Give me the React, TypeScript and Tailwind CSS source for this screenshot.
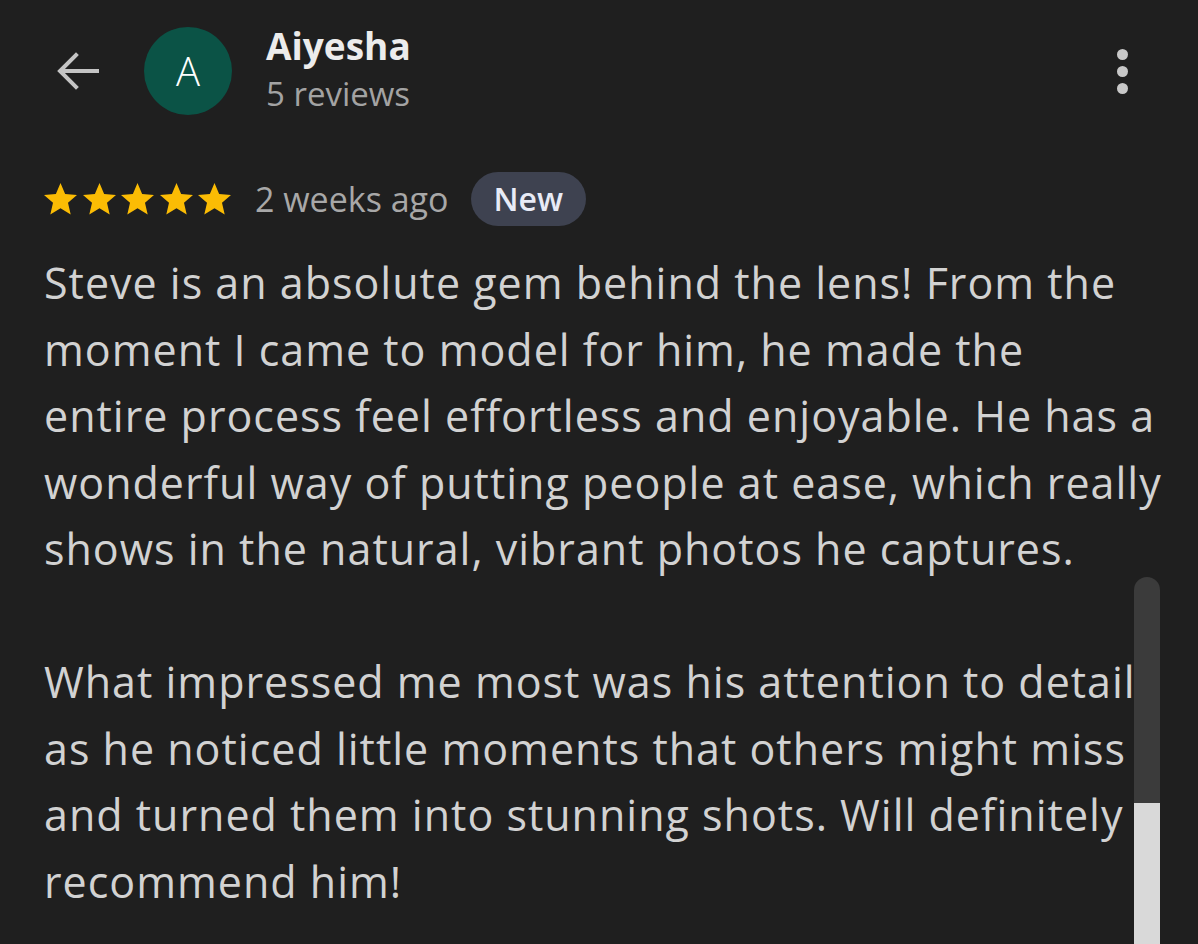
function BackArrow() {
  return (
    <svg width="48" height="48" viewBox="0 0 48 48" fill="none" stroke="#c4c4c4" strokeWidth="4" strokeLinecap="square">
      <path d="M44 24H8" />
      <path d="M23 8L7 24l16 16" />
    </svg>
  )
}

function MoreDots() {
  return (
    <div className="flex flex-col items-center gap-[6px]">
      <span className="block h-[11px] w-[11px] rounded-full bg-[#c8c8c8]" />
      <span className="block h-[11px] w-[11px] rounded-full bg-[#c8c8c8]" />
      <span className="block h-[11px] w-[11px] rounded-full bg-[#c8c8c8]" />
    </div>
  )
}

function StarIcon() {
  return (
    <svg width="33" height="31.5" viewBox="2 2 20 19" fill="#fbbc04">
      <path d="M12 17.27L18.18 21l-1.64-7.03L22 9.24l-7.19-.61L12 2 9.19 8.63 2 9.24l5.46 4.73L5.82 21z" />
    </svg>
  )
}

const firstPara = [
  'Steve is an absolute gem behind the lens! From the',
  'moment I came to model for him, he made the',
  'entire process feel effortless and enjoyable. He has a',
  'wonderful way of putting people at ease, which really',
  'shows in the natural, vibrant photos he captures.',
]

const secondPara = [
  'What impressed me most was his attention to detail',
  'as he noticed little moments that others might miss',
  'and turned them into stunning shots. Will definitely',
  'recommend him!',
]

export default function App() {
  const font = { fontFamily: '"Open Sans", "Noto Sans", sans-serif' }

  return (
    <div className="relative h-[944px] w-[1198px] overflow-hidden bg-[#1f1f1f]" style={font}>
      <header className="flex items-center pl-[53px] pr-[70px] pt-[27px]">
        <BackArrow />
        <div className="ml-[43px] flex h-[88px] w-[88px] shrink-0 items-center justify-center rounded-full bg-[#0b5346] text-[40px] font-light text-white">
          A
        </div>
        <div className="-mb-[1px] -mt-[7px] ml-[34px] flex flex-col">
          <span className="text-[37px] font-bold leading-[51px] text-[#ececec]">Aiyesha</span>
          <span className="text-[33px] leading-[45px] text-[#a3a3a3]">5 reviews</span>
        </div>
        <div className="ml-auto">
          <MoreDots />
        </div>
      </header>

      <div className="mt-[57px] flex items-center pl-[44px]">
        <div className="flex gap-[5.5px]">
          {[0, 1, 2, 3, 4].map((i) => (
            <StarIcon key={i} />
          ))}
        </div>
        <span className="ml-[24px] text-[34px] text-[#a8a8a8]">2 weeks ago</span>
        <span className="ml-[22px] rounded-full bg-[#3e4250] px-[23px] py-[5px] text-[32px] font-semibold leading-[44px] text-[#e8ebf6]">
          New
        </span>
      </div>

      <div className="mt-[24px] px-[44px] text-[43px] leading-[66.5px] tracking-[1px] text-[#d2d2d2]">
        {firstPara.map((line) => (
          <div key={line} className="whitespace-nowrap">
            {line}
          </div>
        ))}
        <div className="h-[66.5px]" />
        {secondPara.map((line) => (
          <div key={line} className="whitespace-nowrap">
            {line}
          </div>
        ))}
      </div>

      <div className="absolute left-[1134px] top-[577px] flex h-[367px] w-[26px] flex-col overflow-hidden rounded-t-full">
        <div className="h-[226px] bg-[#3b3b3b]" />
        <div className="flex-1 bg-[#d9d9d9]" />
      </div>
    </div>
  )
}
